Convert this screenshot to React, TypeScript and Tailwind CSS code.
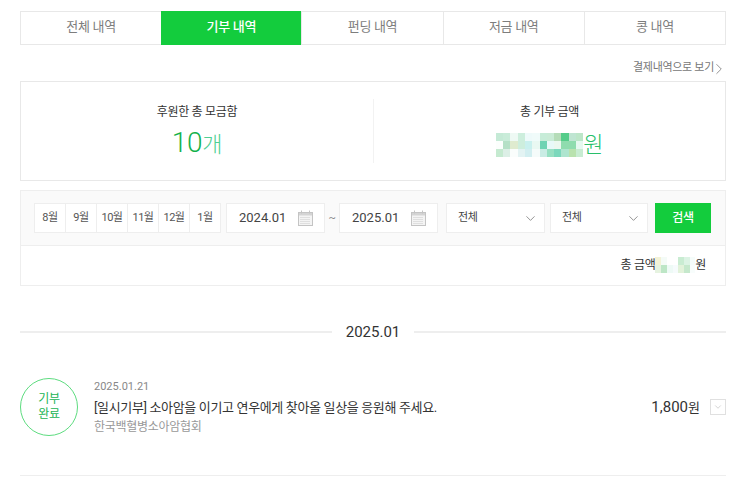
import { ChevronDown, ChevronRight } from 'lucide-react'

const tabs = ['전체 내역', '기부 내역', '펀딩 내역', '저금 내역', '콩 내역']
const months = ['8월', '9월', '10월', '11월', '12월', '1월']

// blurred-out amounts, one colour per mosaic cell
const bigMosaic = [
  ['#c5ead6', '#c9ecd9', '#eef9f4', '#cdeedd', '#eefafa', '#f0fbfa', '#c7ecd8', '#c9ebd6', '#b5dcb8', '#55cc8a', '#bfe5d2', '#bce6c8'],
  ['#fbfefc', '#b5e0c6', '#dfebcf', '#cdeedd', '#c9f0ee', '#e9f8f2', '#6fd3b3', '#e8f9f8', '#ecf8ef', '#8fdcae', '#8fdcae', '#e6f8f0'],
  ['#c5ead0', '#dcefe6', '#fafdfc', '#e3f3f3', '#d2eef0', '#f5fbfa', '#c9ece4', '#97e0c2', '#7cd8bc', '#aee5cf', '#b9e2ae', '#c8ecd2'],
]
const smallMosaic = [
  ['#f3f2d6', '#f4fbf7', '#ffffff', '#ffffff', '#c9ecd2', '#dcf3e4', '#f5fcfa'],
  ['#e6f3e0', '#bde6c6', '#eefaf6', '#f6fbfc', '#e2f2da', '#c5e8cc', '#f8fdfc'],
]

function Mosaic({ rows, cell }: { rows: string[][]; cell: string }) {
  return (
    <div className="flex flex-col">
      {rows.map((row, i) => (
        <div key={i} className="flex">
          {row.map((color, j) => (
            <div key={j} className={cell} style={{ backgroundColor: color }} />
          ))}
        </div>
      ))}
    </div>
  )
}

function CalendarIcon() {
  return (
    <svg width="15" height="16" viewBox="0 0 15 16" fill="none" className="text-[#c4c4c4]">
      <rect x="0.5" y="2.5" width="14" height="13" fill="#f4f4f4" stroke="currentColor" />
      <rect x="1" y="3" width="13" height="2.5" fill="#d4d4d4" />
      <path d="M3.5 0.5v3M11.5 0.5v3" stroke="currentColor" />
      <path d="M2.5 7.5h10M2.5 9.5h10M2.5 11.5h10M2.5 13.5h10" stroke="#cacaca" strokeDasharray="1 1" />
    </svg>
  )
}

function DateField({ value }: { value: string }) {
  return (
    <div className="w-[99px] h-[30px] flex items-center justify-between pl-[12px] pr-[11px] bg-white border border-[#eeeeee] text-[13px] text-[#444444] tracking-normal">
      <span>{value}</span>
      <CalendarIcon />
    </div>
  )
}

function SelectField({ width }: { width: string }) {
  return (
    <div className={`${width} h-[30px] flex items-center justify-between pl-[11px] pr-[6px] bg-white border border-[#eeeeee] text-[11px] text-[#444444]`}>
      <span>전체</span>
      <ChevronDown size={15} strokeWidth={1} className="text-[#555555]" />
    </div>
  )
}

export default function App() {
  return (
    <div className="w-[743px] h-[487px] overflow-hidden bg-white px-[20px] pt-[11px] font-['Roboto','Noto_Sans_CJK_KR',sans-serif] tracking-[-0.3px]">
      <div className="w-[706px] h-[34px] flex border border-[#e8e8e8]">
        {tabs.map((tab, i) => (
          <div
            key={tab}
            className={
              i === 1
                ? 'flex-1 -my-px pb-[2px] flex items-center justify-center bg-[#13cc3d] text-[13px] font-medium text-white'
                : 'flex-1 pb-[2px] flex items-center justify-center text-[13px] text-[#7d7d7d] border-l border-[#e8e8e8] first:border-l-0'
            }
          >
            {tab}
          </div>
        ))}
      </div>

      <div className="h-[36px] flex items-center justify-end pt-[11px] text-[11px] text-[#777777]">
        <span>결제내역으로 보기</span>
        <ChevronRight size={18} strokeWidth={1.2} className="-mr-[5px] -ml-[4px] text-[#888888]" />
      </div>

      <div className="w-[706px] h-[100px] flex items-center border border-[#e8e8e8]">
        <div className="w-[353px] flex flex-col items-center border-r border-[#f2f2f2] h-[64px]">
          <div className="text-[12px] leading-[20px] text-[#333333] mt-[3px]">후원한 총 모금함</div>
          <div className="flex items-baseline leading-[36px] mt-[3px] text-[#13b14a]">
            <span className="text-[28px] font-light">10</span>
            <span className="text-[22px] font-light text-[#4fcf94]">개</span>
          </div>
        </div>
        <div className="flex-1 flex flex-col items-center h-[64px]">
          <div className="text-[12px] leading-[20px] text-[#333333] mt-[3px]">총 기부 금액</div>
          <div className="flex items-center mt-[7px] h-[32px]">
            <Mosaic rows={bigMosaic} cell="w-[7.3px] h-[8px]" />
            <span className="text-[22px] font-light text-[#28bf6a] leading-none">원</span>
          </div>
        </div>
      </div>

      <div className="w-[706px] h-[96px] mt-[9px] border border-[#eeeeee] flex flex-col">
        <div className="h-[55px] shrink-0 flex items-center pl-[13px] bg-[#fafafa] border-b border-[#eeeeee]">
          <div className="flex">
            {months.map((m) => (
              <div key={m} className="w-[32px] h-[30px] flex items-center justify-center -ml-px first:ml-0 bg-white border border-[#eeeeee] text-[11px] text-[#555555] tracking-[-0.5px]">
                {m}
              </div>
            ))}
          </div>
          <div className="ml-[5px]">
            <DateField value="2024.01" />
          </div>
          <span className="w-[14px] text-center text-[11px] text-[#888888]">~</span>
          <DateField value="2025.01" />
          <div className="ml-[8px] flex gap-[5px]">
            <SelectField width="w-[99px]" />
            <SelectField width="w-[98px]" />
          </div>
          <button className="ml-[7px] w-[56px] h-[30px] bg-[#13cc3d] text-[12px] font-medium text-white">검색</button>
        </div>
        <div className="flex-1 flex items-center justify-end pr-[19px] pb-[2px] text-[12px] text-[#333333]">
          <span>총 금액</span>
          <Mosaic rows={smallMosaic} cell="w-[5.7px] h-[8px]" />
          <span>원</span>
        </div>
      </div>

      <div className="w-[706px] flex items-center mt-[34px] h-[24px]">
        <div className="flex-1 h-[2px] bg-[#eeeeee]" />
        <span className="w-[82px] text-center text-[15px] text-[#333333] tracking-normal">2025.01</span>
        <div className="flex-1 h-[2px] bg-[#eeeeee]" />
      </div>

      <div className="w-[706px] h-[121px] mt-[11px] flex items-center border-b border-[#eeeeee] pb-[16px]">
        <div className="w-[58px] h-[58px] shrink-0 rounded-full border border-[#5ddc7f] flex flex-col items-center justify-center text-[12px] leading-[15px] text-[#22b455]">
          <div>기부</div>
          <div>완료</div>
        </div>
        <div className="ml-[16px] flex-1">
          <div className="text-[11px] leading-[15px] text-[#888888] tracking-normal">2025.01.21</div>
          <div className="text-[13px] leading-[22px] mt-[3px] text-[#333333] tracking-[-0.35px]">[일시기부] 소아암을 이기고 연우에게 찾아올 일상을 응원해 주세요.</div>
          <div className="text-[12px] leading-[17px] text-[#999999]">한국백혈병소아암협회</div>
        </div>
        <div className="flex items-center gap-[10px]">
          <span className="text-[15px] text-[#333333] tracking-normal">
            1,800<span className="text-[13px]">원</span>
          </span>
          <div className="w-[16px] h-[16px] flex items-center justify-center border border-[#e0e0e0]">
            <ChevronDown size={10} strokeWidth={1} className="text-[#999999]" />
          </div>
        </div>
      </div>
    </div>
  )
}
